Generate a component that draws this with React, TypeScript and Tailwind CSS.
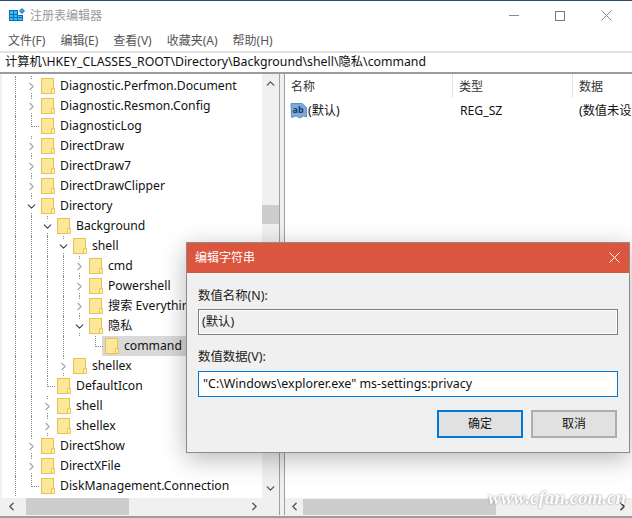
import { ChevronDown, ChevronLeft, ChevronRight, ChevronUp } from "lucide-react";

const FONT = "font-['Noto_Sans','Noto_Sans_CJK_SC',sans-serif]";

type Node = {
    label: string;
    depth: number;
    state?: "open" | "closed";
    guides: number[];
    selected?: boolean;
};

// guides = which indent columns carry a dotted line in that row
const rows: Node[] = [
    { label: "Diagnostic.Perfmon.Document", depth: 0, state: "closed", guides: [0] },
    { label: "Diagnostic.Resmon.Config", depth: 0, state: "closed", guides: [0] },
    { label: "DiagnosticLog", depth: 0, guides: [0] },
    { label: "DirectDraw", depth: 0, state: "closed", guides: [0] },
    { label: "DirectDraw7", depth: 0, state: "closed", guides: [0] },
    { label: "DirectDrawClipper", depth: 0, state: "closed", guides: [0] },
    { label: "Directory", depth: 0, state: "open", guides: [0] },
    { label: "Background", depth: 1, state: "open", guides: [0, 1] },
    { label: "shell", depth: 2, state: "open", guides: [0, 1, 2] },
    { label: "cmd", depth: 3, state: "closed", guides: [0, 1, 2, 3] },
    { label: "Powershell", depth: 3, state: "closed", guides: [0, 1, 2, 3] },
    { label: "搜索 Everything", depth: 3, state: "closed", guides: [0, 1, 2, 3] },
    { label: "隐私", depth: 3, state: "open", guides: [0, 1, 2, 3] },
    { label: "command", depth: 4, guides: [0, 1, 2, 3], selected: true },
    { label: "shellex", depth: 2, state: "closed", guides: [0, 1, 2] },
    { label: "DefaultIcon", depth: 1, guides: [0, 1, 2] },
    { label: "shell", depth: 1, state: "closed", guides: [0, 1, 2] },
    { label: "shellex", depth: 1, state: "closed", guides: [0, 1] },
    { label: "DirectShow", depth: 0, state: "closed", guides: [0] },
    { label: "DirectXFile", depth: 0, state: "closed", guides: [0] },
    { label: "DiskManagement.Connection", depth: 0, guides: [0] },
];

function Folder() {
    return (
        <svg width="14" height="16" viewBox="0 0 14 16" className="shrink-0">
            <rect x="0.5" y="0.5" width="12" height="15" fill="#fce58f" stroke="#e8c34f" />
            <rect x="1" y="1" width="11" height="14" fill="#fde89a" />
            <path d="M10.5 15.5 V10.5 H13.5 V15.5 Z" fill="#fdeeb5" stroke="#e8c34f" />
        </svg>
    );
}

function TreeRow({ node }: { node: Node }) {
    const columns = Array.from({ length: node.depth + 2 }, (_, i) => i);
    return (
        <div className="flex h-5 items-center text-[12.2px] text-[#111]">
            {columns.map((c) => {
                const isToggle = c === node.depth + 1;
                return (
                    <div key={c} className="relative h-5 w-4 shrink-0">
                        {node.guides.includes(c) && !isToggle && (
                            <div className="absolute left-2 top-0 h-5 border-l border-dotted border-[#8a8a8a]" />
                        )}
                        {isToggle && !node.state && (
                            <>
                                <div className="absolute left-2 top-0 h-[11px] border-l border-dotted border-[#8a8a8a]" />
                                <div className="absolute left-2 top-[10px] w-2 border-t border-dotted border-[#8a8a8a]" />
                            </>
                        )}
                        {isToggle && node.state && (
                            <>
                                <div className="absolute left-2 top-0 h-[3px] border-l border-dotted border-[#8a8a8a]" />
                                <div className="absolute bottom-0 left-2 h-[3px] border-l border-dotted border-[#8a8a8a]" />
                            </>
                        )}
                        {isToggle && node.state === "closed" && (
                            <ChevronRight size={13} strokeWidth={2} className="absolute left-[2px] top-[4px] text-[#a6a6a6]" />
                        )}
                        {isToggle && node.state === "open" && (
                            <ChevronDown size={13} strokeWidth={2} className="absolute left-[2px] top-[4px] text-[#404040]" />
                        )}
                    </div>
                );
            })}
            <div className={`ml-[-1px] flex h-5 items-center pl-[3px] ${node.selected ? "w-[100px] bg-[#d9d9d9]" : ""}`}>
                <Folder />
                <span className="ml-[5px] whitespace-nowrap">{node.label}</span>
            </div>
        </div>
    );
}

function RegIcon() {
    return (
        <svg width="18" height="18" viewBox="0 0 18 18" className="shrink-0">
            <path d="M1 1.5 H12 L16.5 5.5 V15 L13.5 14 L10 16 L6 14 L1.5 15.5 Z" fill="#7fa8d8" stroke="#5f8fc4" />
            <text x="2.5" y="11" fontSize="9" fontWeight="700" fill="#123e6b" fontFamily="Noto Sans, sans-serif">ab</text>
        </svg>
    );
}

function WinBtn({ primary, children }: { primary?: boolean; children: string }) {
    return (
        <button
            className={`flex h-7 w-[86px] items-center justify-center border-2 bg-[#e1e1e1] text-[12px] text-[#111] ${
                primary ? "border-[#0078d7]" : "border-[#adadad]"
            }`}
        >
            {children}
        </button>
    );
}

export default function App() {
    return (
        <div className={`relative flex h-[518px] w-[632px] flex-col overflow-hidden bg-white ${FONT}`}>
            <div className="h-px bg-[#2f4a6b]" />

            {/* Title bar */}
            <div className="flex h-[29px] items-center pl-[9px] pr-[20px]">
                <svg width="17" height="17" viewBox="0 0 17 17" className="shrink-0">
                    <path d="M0 3h9v5h5v6H0z" fill="#0e6fb8" />
                    <path d="M1 4h3v3H1zM5 4h3v3H5zM1 8h3v2H1zM5 8h3v2H5zM9 9h4v1H9zM1 11h3v2H1zM5 11h3v2H5zM9 11h4v2H9z" fill="#35bdf5" />
                    <path d="M13 1l3 3-3 3-3-3z" fill="#1c86c8" />
                    <path d="M13 3l1 1-1 1-1-1z" fill="#7fd4f7" />
                </svg>
                <span className="ml-[4px] text-[12px] text-[#9a9a9a]">注册表编辑器</span>
                <div className="ml-auto flex items-center gap-[36px]">
                    <div className="h-px w-[10px] bg-[#8a8a8a]" />
                    <div className="size-[10px] border border-[#7a7a7a]" />
                    <svg width="11" height="11" viewBox="0 0 11 11">
                        <path d="M0.5 0.5 L10.5 10.5 M10.5 0.5 L0.5 10.5" stroke="#8a8a8a" fill="none" />
                    </svg>
                </div>
            </div>

            {/* Menu */}
            <div className="flex h-[21px] items-center gap-[15px] pl-2 text-[12px] text-[#555]">
                <span>文件(F)</span>
                <span>编辑(E)</span>
                <span>查看(V)</span>
                <span>收藏夹(A)</span>
                <span>帮助(H)</span>
            </div>

            {/* Address bar */}
            <div className="flex h-[23px] items-center border-y-2 border-[#9c9c9c] border-t-[#e3e3e3] pl-[5px] text-[12.3px] text-[#111]">
                计算机\HKEY_CLASSES_ROOT\Directory\Background\shell\隐私\command
            </div>

            {/* Panes */}
            <div className="flex min-h-0 flex-1 border-b-2 border-[#9c9c9c] bg-[#f0f0f0] pb-px pl-[2px]">
                <div className="flex w-[278px] flex-col border-r border-[#a0a0a0] bg-white">
                    <div className="flex min-h-0 flex-1">
                        <div className="min-w-0 flex-1 overflow-hidden pl-[5px] pt-[2px]">
                            {rows.map((r, i) => (
                                <TreeRow key={i} node={r} />
                            ))}
                        </div>
                        <div className="flex w-[17px] flex-col items-center bg-[#f0f0f0]">
                            <ChevronUp size={13} strokeWidth={2.5} className="mt-[3px] text-[#555]" />
                            <div className="mt-[115px] h-[19px] w-[17px] bg-[#cdcdcd]" />
                            <ChevronDown size={13} strokeWidth={2.5} className="mb-[3px] mt-auto text-[#555]" />
                        </div>
                    </div>
                    <div className="flex h-[17px] items-center bg-[#f0f0f0]">
                        <ChevronLeft size={13} strokeWidth={2.5} className="ml-[3px] text-[#555]" />
                        <div className="ml-[8px] h-[17px] w-[103px] bg-[#cdcdcd]" />
                        <ChevronRight size={13} strokeWidth={2.5} className="ml-auto mr-[18px] text-[#555]" />
                    </div>
                </div>

                <div className="w-[4px]" />

                <div className="flex min-w-0 flex-1 flex-col border-l border-[#a0a0a0] bg-white">
                    <div className="flex h-6 text-[12px] text-[#333]">
                        <div className="w-[168px] shrink-0 border-r border-[#e5e5e5] pl-[6px] leading-[26px]">名称</div>
                        <div className="w-[120px] shrink-0 border-r border-[#e5e5e5] pl-[6px] leading-[26px]">类型</div>
                        <div className="pl-[6px] leading-[26px]">数据</div>
                    </div>
                    <div className="mt-[3px] flex h-5 items-center text-[12.2px] text-[#111]">
                        <div className="flex w-[168px] shrink-0 items-center pl-[5px]">
                            <RegIcon />
                            <span>(默认)</span>
                        </div>
                        <div className="w-[120px] shrink-0 pl-[7px]">REG_SZ</div>
                        <div className="whitespace-nowrap pl-[6px]">(数值未设置)</div>
                    </div>
                    <div className="mt-auto flex h-[17px] items-center bg-[#f0f0f0]">
                        <ChevronLeft size={13} strokeWidth={2.5} className="ml-[3px] text-[#555]" />
                        <div className="ml-[2px] h-[16px] w-[193px] bg-[#cdcdcd]" />
                        <ChevronRight size={13} strokeWidth={2.5} className="ml-auto mr-[3px] text-[#333]" />
                    </div>
                </div>
            </div>

            {/* Edit string dialog */}
            <div className="absolute left-[186px] top-[242px] h-[211px] w-[444px] border border-[#8c8c8c] bg-[#f0f0f0] shadow-[0_6px_24px_rgba(0,0,0,0.28)]">
                <div className="flex h-[30px] items-center justify-between bg-[#dc563f] pb-px pl-2 pr-[9px] text-[12px] text-white">
                    <span>编辑字符串</span>
                    <svg width="11" height="11" viewBox="0 0 11 11">
                        <path d="M0.5 0.5 L10.5 10.5 M10.5 0.5 L0.5 10.5" stroke="#fff" fill="none" />
                    </svg>
                </div>
                <div className="flex flex-col px-[11px] pt-[13px] text-[12.4px] text-[#222]">
                    <div className="h-5 leading-5">数值名称(N):</div>
                    <div className="mt-[3px] flex h-[26px] items-center border border-[#7f7f7f] pl-[3px] shadow-[inset_0_0_0_1px_#fff]">(默认)</div>
                    <div className="mt-[12px] h-5 leading-5">数值数据(V):</div>
                    <div className="mt-[4px] flex h-[26px] items-center border border-[#0078d7] bg-white pl-[4px] text-[#111]">
                        &quot;C:\Windows\explorer.exe&quot; ms-settings:privacy
                    </div>
                    <div className="mt-[13px] flex justify-end gap-2 pr-px">
                        <WinBtn primary>确定</WinBtn>
                        <WinBtn>取消</WinBtn>
                    </div>
                </div>
            </div>

            {/* Watermark */}
            <div className="absolute left-[488px] top-[488px] font-['Liberation_Serif',serif] text-[19px] font-bold italic leading-5 text-white [text-shadow:0_0_2px_#777]">
                www.cfan.com.cn
            </div>
        </div>
    );
}
